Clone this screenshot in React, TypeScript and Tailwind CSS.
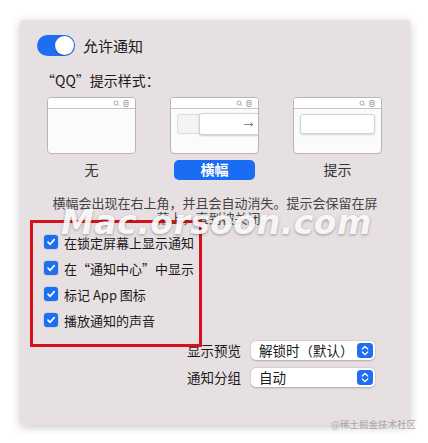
import React from "react";

const FONT = {
  fontFamily: '"Noto Sans CJK SC", "Noto Sans", sans-serif',
};

const TitleBarIcons = () => (
  <svg width="16" height="7" viewBox="0 0 16 7" className="absolute right-[6px] top-[2px]">
    {/* search */}
    <circle cx="3" cy="3" r="2" fill="none" stroke="#9a9a9a" strokeWidth="0.8" />
    <line x1="4.5" y1="4.5" x2="6" y2="6" stroke="#9a9a9a" strokeWidth="0.8" />
    {/* notification list */}
    <rect x="11" y="0.5" width="4" height="6" rx="0.8" fill="none" stroke="#8a8a8a" strokeWidth="0.8" />
    <line x1="11.8" y1="2.5" x2="14.2" y2="2.5" stroke="#8a8a8a" strokeWidth="0.7" />
    <line x1="11.8" y1="4.3" x2="14.2" y2="4.3" stroke="#8a8a8a" strokeWidth="0.7" />
  </svg>
);

const Thumb = ({ kind }: { kind: "none" | "banner" | "alert" }) => (
  <div className="relative w-[89px] h-[57px] bg-[#fbfbfb] border border-[#b9b4b6] rounded-[4px] overflow-hidden">
    <div className="relative h-[11px] border-b border-[#c9c5c7] bg-white">
      <TitleBarIcons />
    </div>
    {kind === "banner" && (
      <>
        <div className="absolute left-[6px] top-[16px] w-[26px] h-[20px] bg-[#f4f4f4] border border-[#dcdcdc] rounded-[3px]" />
        <div className="absolute left-[28px] top-[15px] w-[70px] h-[22px] bg-white border border-[#d2d2d2] rounded-[3px] shadow-[0_1px_2px_rgba(0,0,0,0.18)]">
          <svg width="10" height="5" viewBox="0 0 10 5" className="absolute left-[44px] top-[8px]">
            <line x1="0" y1="2.5" x2="8.5" y2="2.5" stroke="#6a6a6a" strokeWidth="0.8" />
            <path d="M6.5 0.8 L9 2.5 L6.5 4.2" fill="none" stroke="#6a6a6a" strokeWidth="0.8" />
          </svg>
        </div>
      </>
    )}
    {kind === "alert" && (
      <div className="absolute left-[6px] top-[16px] w-[75px] h-[20px] bg-white border border-[#d2d2d2] rounded-[3px] shadow-[0_1px_2px_rgba(0,0,0,0.15)]" />
    )}
  </div>
);

const Checkbox = ({ label }: { label: string }) => (
  <div className="flex items-center h-[26px]">
    <div className="w-[14px] h-[14px] rounded-[3px] bg-[#1d6ff2] flex items-center justify-center shadow-[0_0_0_0.5px_rgba(0,0,0,0.15)]">
      <svg width="10" height="10" viewBox="0 0 10 10">
        <path d="M2 5.2 L4.1 7.3 L8.2 2.6" fill="none" stroke="white" strokeWidth="1.7" strokeLinecap="round" strokeLinejoin="round" />
      </svg>
    </div>
    <span className="ml-[6px] text-[13px] leading-none text-[#1a1a1a]">{label}</span>
  </div>
);

const Stepper = () => (
  <svg width="16" height="15" viewBox="0 0 16 15">
    <rect x="0" y="0" width="16" height="15" rx="3.5" fill="#1f6ff2" />
    <path d="M5.3 6 L8 3.4 L10.7 6" fill="none" stroke="white" strokeWidth="1.3" strokeLinecap="round" strokeLinejoin="round" />
    <path d="M5.3 9 L8 11.6 L10.7 9" fill="none" stroke="white" strokeWidth="1.3" strokeLinecap="round" strokeLinejoin="round" />
  </svg>
);

const PopupRow = ({ label, value }: { label: string; value: string }) => (
  <div className="flex items-center justify-end pr-[35px] gap-[10px] h-[19px]">
    <span className="text-[13.5px] leading-none text-[#1a1a1a]">{label}</span>
    <div className="w-[124px] h-[19px] bg-white rounded-[5px] shadow-[0_0.5px_2px_rgba(0,0,0,0.25)] flex items-center justify-between pl-[8px] pr-[2px]">
      <span className="text-[13.5px] leading-none text-[#1a1a1a]">{value}</span>
      <Stepper />
    </div>
  </div>
);

export default function App() {
  return (
    <div className="relative w-[428px] h-[443px] bg-white overflow-hidden" style={FONT}>
      <div className="relative ml-[20px] mt-[20px] w-[390px] h-[405px] bg-[#e7e0e2] rounded-[3px] shadow-[0_2px_10px_rgba(0,0,0,0.22)] flex flex-col">
        {/* toggle */}
        <div className="flex items-center pl-[17px] pt-[15px]">
          <div className="w-[38px] h-[21px] rounded-full bg-[#1f6ef2] flex items-center justify-end pr-[1px]">
            <div className="w-[19px] h-[19px] rounded-full bg-white shadow-[0_0.5px_1.5px_rgba(0,0,0,0.35)]" />
          </div>
          <span className="ml-[8px] text-[15px] leading-none text-[#1a1a1a]">允许通知</span>
        </div>

        <div className="mt-[15px] pl-[21px] h-[18px] flex items-center text-[14px] text-[#1a1a1a]">
          “QQ”提示样式：
        </div>

        {/* styles */}
        <div className="mt-[8px] ml-[10px] w-[369px] grid grid-cols-3">
          <div className="flex justify-center">
            <Thumb kind="none" />
          </div>
          <div className="flex justify-center">
            <Thumb kind="banner" />
          </div>
          <div className="flex justify-center">
            <Thumb kind="alert" />
          </div>
        </div>
        <div className="mt-[5px] ml-[10px] w-[369px] grid grid-cols-3 h-[20px] items-center">
          <div className="text-center text-[14px] text-[#333]">无</div>
          <div className="flex justify-center">
            <div className="w-[81px] h-[20px] rounded-[5px] bg-[#1a6cf4] text-white text-[14px] font-bold flex items-center justify-center">
              横幅
            </div>
          </div>
          <div className="text-center text-[14px] text-[#333]">提示</div>
        </div>

        <p className="mt-[16px] text-center text-[13px] leading-[15px] text-[#444]">
          横幅会出现在右上角，并且会自动消失。提示会保留在屏
          <br />
          幕上，直到被关闭。
        </p>

        {/* checkboxes */}
        <div className="mt-[4px] pl-[24px] flex flex-col">
          <Checkbox label="在锁定屏幕上显示通知" />
          <Checkbox label="在“通知中心”中显示" />
          <Checkbox label="标记 App 图标" />
          <Checkbox label="播放通知的声音" />
        </div>

        <div className="mt-[8px] flex flex-col gap-[8px]">
          <PopupRow label="显示预览" value="解锁时（默认）" />
          <PopupRow label="通知分组" value="自动" />
        </div>

        {/* red annotation box */}
        <div className="absolute left-[10px] top-[200px] w-[172px] h-[127px] border-[3px] border-[#d5121c] pointer-events-none" />

        {/* site watermark */}
        <div
          className="absolute left-[41px] top-[186px] text-[33px] leading-[33px] font-bold italic text-white/90 tracking-[0.5px] pointer-events-none [text-shadow:0_1px_3px_rgba(0,0,0,0.35)]"
          style={{ fontFamily: '"DejaVu Sans", sans-serif' }}
        >
          Mac.orsoon.com
        </div>
      </div>

      <div className="absolute right-[12px] top-[420px] text-[9.5px] leading-none text-[#a9a4a6]">
        @稀土掘金技术社区
      </div>
    </div>
  );
}
